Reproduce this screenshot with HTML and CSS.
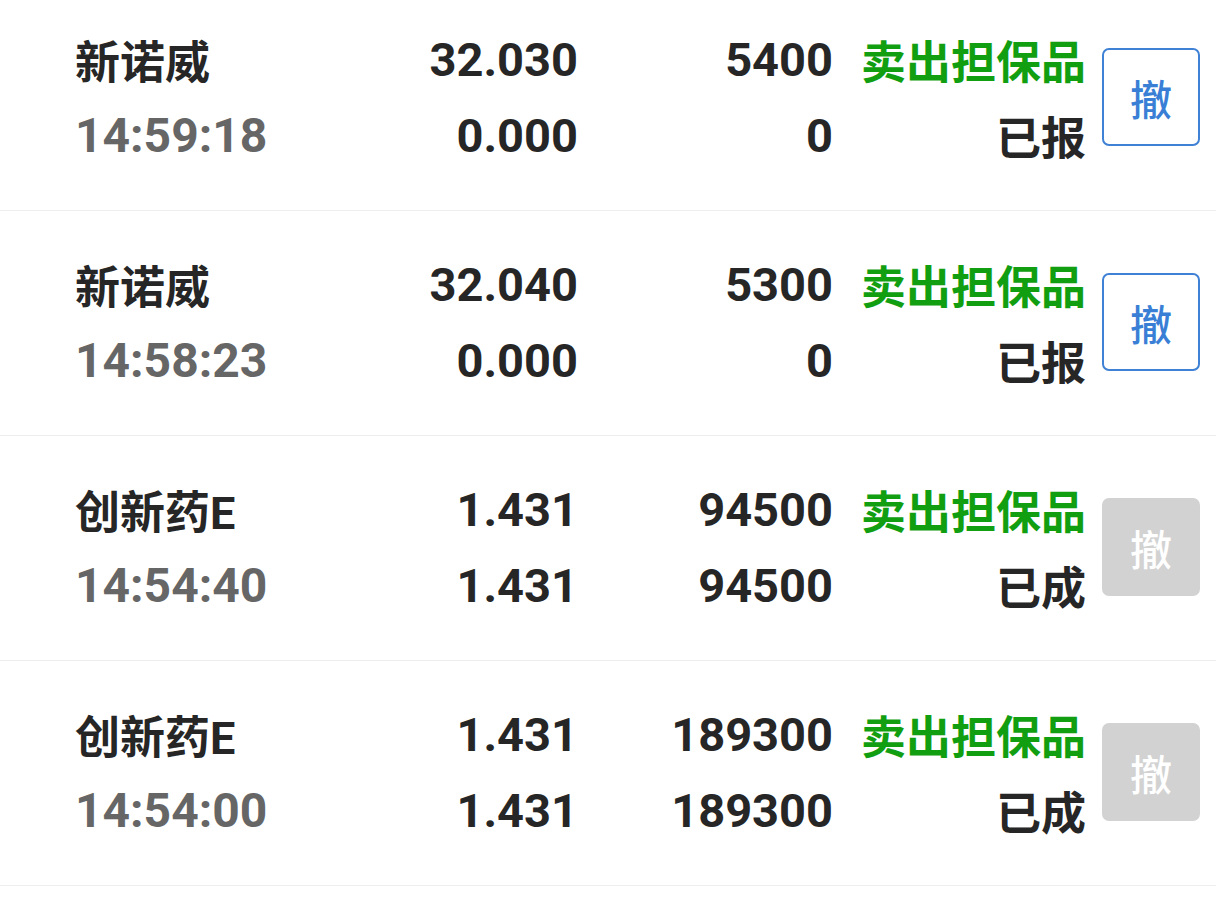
FILE: index.html
```html
<!DOCTYPE html>
<html lang="zh-CN">
<head>
    <meta charset="UTF-8">
    <meta name="viewport" content="width=device-width, initial-scale=1.0">
    <title>委托列表</title>
    <link rel="stylesheet" href="styles.css">
</head>
<body>
    <div class="orders">
        <div class="order">
            <div class="name">新诺威</div>
            <div class="num">32.030</div>
            <div class="num">5400</div>
            <div class="type">卖出担保品</div>
            <button class="cancel" type="button">撤</button>
            <div class="num time">14:59:18</div>
            <div class="num">0.000</div>
            <div class="num">0</div>
            <div class="status">已报</div>
        </div>
        <div class="order">
            <div class="name">新诺威</div>
            <div class="num">32.040</div>
            <div class="num">5300</div>
            <div class="type">卖出担保品</div>
            <button class="cancel" type="button">撤</button>
            <div class="num time">14:58:23</div>
            <div class="num">0.000</div>
            <div class="num">0</div>
            <div class="status">已报</div>
        </div>
        <div class="order">
            <div class="name">创新药E</div>
            <div class="num">1.431</div>
            <div class="num">94500</div>
            <div class="type">卖出担保品</div>
            <button class="cancel disabled" type="button" disabled>撤</button>
            <div class="num time">14:54:40</div>
            <div class="num">1.431</div>
            <div class="num">94500</div>
            <div class="status">已成</div>
        </div>
        <div class="order">
            <div class="name">创新药E</div>
            <div class="num">1.431</div>
            <div class="num">189300</div>
            <div class="type">卖出担保品</div>
            <button class="cancel disabled" type="button" disabled>撤</button>
            <div class="num time">14:54:00</div>
            <div class="num">1.431</div>
            <div class="num">189300</div>
            <div class="status">已成</div>
        </div>
    </div>
</body>
</html>
```

FILE: styles.css
```css
body {
    margin: 0;
    background: #fff;
    color: #262626;
    font-family: Roboto, "Noto Sans CJK SC", sans-serif;
    font-weight: bold;
}
.orders {
    margin-top: -14px;
}
.order {
    display: grid;
    grid-template-columns: 255px 248px 255px 253px 98px;
    grid-template-rows: 76px 76px;
    align-items: center;
    height: 225px;
    box-sizing: border-box;
    padding: 35px 16px 37px 75px;
    border-bottom: 1px solid #eeeeee;
}
.name {
    font-size: 45px;
    white-space: nowrap;
}
.num {
    font-size: 47px;
    text-align: right;
    white-space: nowrap;
}
.num.time {
    font-size: 48px;
    text-align: left;
    color: #666;
}
.type,
.status {
    font-size: 45px;
    text-align: right;
    white-space: nowrap;
}
.type {
    color: #119e11;
}
.cancel {
    grid-column: 5;
    grid-row: 1 / span 2;
    align-self: center;
    width: 98px;
    height: 98px;
    margin-left: 16px;
    box-sizing: border-box;
    border: 2px solid #3f81d4;
    border-radius: 7px;
    background: #fff;
    color: #3a7fd6;
    font-family: "Noto Sans CJK SC", sans-serif;
    font-size: 42px;
    font-weight: 500;
    padding: 0;
}
.cancel.disabled {
    border-color: #d2d2d2;
    background: #d2d2d2;
    color: #fff;
}
```
